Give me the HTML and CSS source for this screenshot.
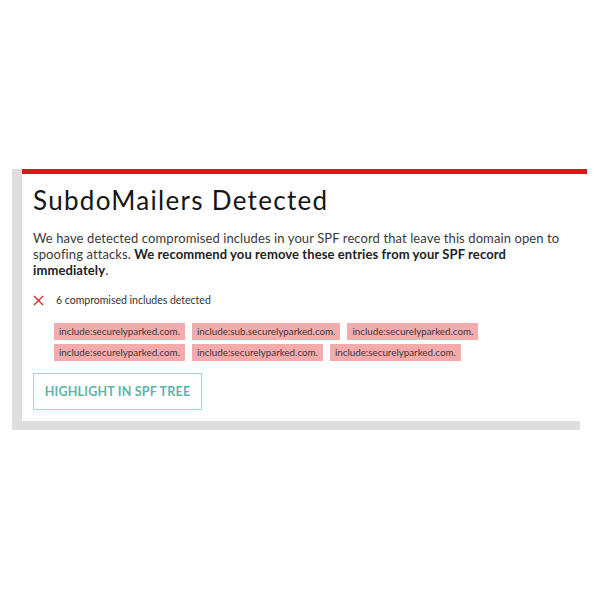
FILE: index.html
```html
<!DOCTYPE html>
<html>
<head>
<meta charset="utf-8">
<link rel="stylesheet" href="styles.css">
</head>
<body>
<div class="frame">
  <div class="card">
    <h1 class="title">SubdoMailers Detected</h1>
    <p class="desc">We have detected compromised includes in your SPF record that leave this domain open to spoofing attacks. <b>We recommend you remove these entries from your SPF record immediately</b>.</p>
    <div class="status">
      <svg class="x-icon" width="11" height="11" viewBox="0 0 11 11"><path d="M1 1 L10 10 M10 1 L1 10" stroke="#e0262b" stroke-width="1.4" fill="none"/></svg>
      <span>6 compromised includes detected</span>
    </div>
    <div class="tags">
      <span class="tag">include:securelyparked.com.</span>
      <span class="tag">include:sub.securelyparked.com.</span>
      <span class="tag">include:securelyparked.com.</span>
      <span class="tag">include:securelyparked.com.</span>
      <span class="tag">include:securelyparked.com.</span>
      <span class="tag">include:securelyparked.com.</span>
    </div>
    <button class="btn">HIGHLIGHT IN SPF TREE</button>
  </div>
</div>
</body>
</html>
```
FILE: styles.css
```css
html, body {
  margin: 0;
  padding: 0;
  background: #fff;
}
body {
  padding-top: 176px;
  font-family: "Lato", "Open Sans", sans-serif;
}
.frame {
  margin-left: 12px;
  width: 568px;
  box-sizing: border-box;
  background: #dedede;
  padding: 0 0 9px 10px;
}
.card {
  margin-top: -7px;
  width: 565px;
  height: 252px;
  box-sizing: border-box;
  border-top: 5px solid #e3121b;
  background: #fff;
  padding: 11px 11px 0 11px;
}
.title {
  margin: 0;
  font-weight: 400;
  font-size: 26px;
  line-height: 30px;
  color: #151515;
  letter-spacing: 1.3px;
}
.desc {
  margin: 15px 0 0 0;
  font-size: 13px;
  line-height: 16px;
  color: #3a3a3a;
  letter-spacing: 0.1px;
}
.desc b {
  font-weight: 700;
  color: #222;
}
.status {
  margin-top: 15px;
  display: flex;
  align-items: center;
  gap: 12px;
  font-size: 10.5px;
  line-height: 14px;
  color: #333;
}
.x-icon {
  display: block;
}
.tags {
  margin: 16px 0 0 21px;
  width: 440px;
  display: flex;
  flex-wrap: wrap;
  gap: 4px 7px;
}
.tag {
  background: #f4abab;
  color: #3a3a3a;
  font-size: 9.8px;
  line-height: 17px;
  height: 17px;
  padding: 0 5px;
}
.btn {
  display: block;
  margin-top: 12px;
  width: 169px;
  height: 37px;
  background: #fff;
  border: 1px solid #9ed8d2;
  color: #5db5aa;
  font-family: "Lato", sans-serif;
  font-weight: 700;
  font-size: 12.5px;
  padding: 0;
  letter-spacing: 0.2px;
}
```
